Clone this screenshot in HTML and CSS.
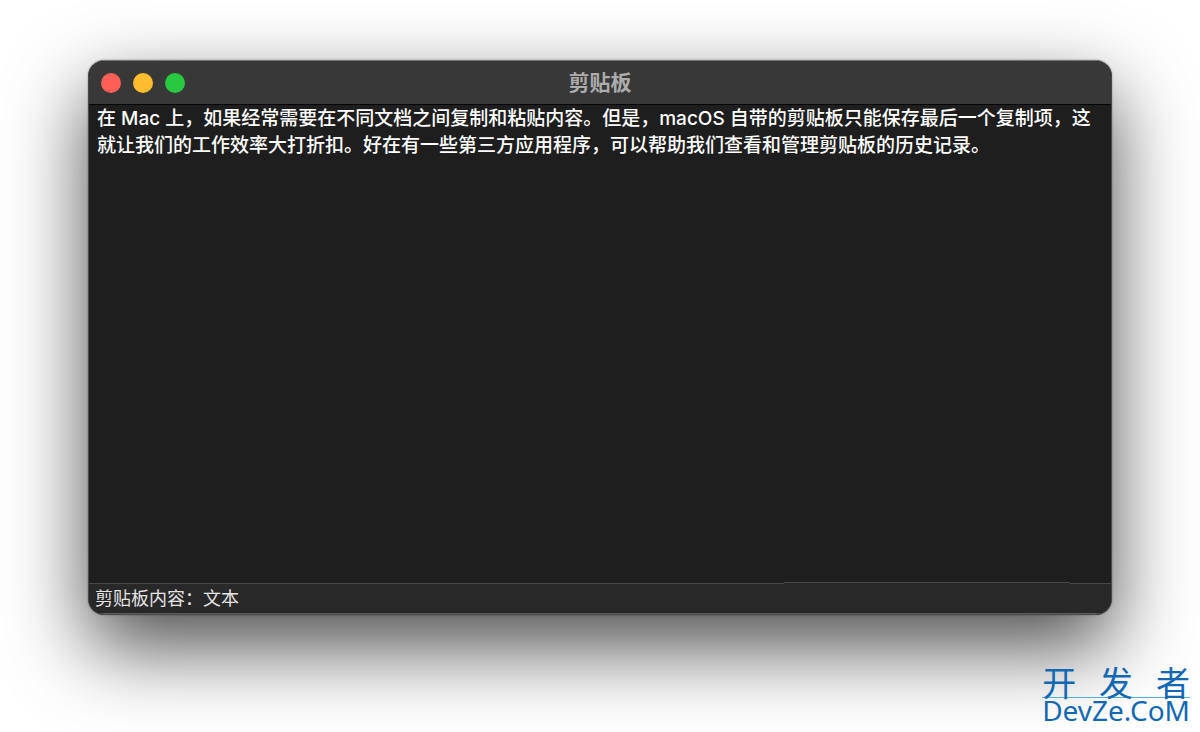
FILE: index.html
```html
<!DOCTYPE html>
<html lang="zh-CN">

<head>
    <meta charset="utf-8">
    <meta name="viewport" content="width=device-width, initial-scale=1">
    <title>剪贴板</title>
    <link rel="stylesheet" href="styles.css">
</head>

<body>
    <div class="window">
        <header class="titlebar">
            <div class="controls">
                <button class="close" type="button" aria-label="关闭"></button>
                <button class="minimize" type="button" aria-label="最小化"></button>
                <button class="zoom" type="button" aria-label="缩放"></button>
            </div>
            <h1>剪贴板</h1>
        </header>

        <main class="content">
            <p>在 Mac 上，如果经常需要在不同文档之间复制和粘贴内容。但是，macOS 自带的剪贴板只能保存最后一个复制项，这就让我们的工作效率大打折扣。好在有一些第三方应用程序，可以帮助我们查看和管理剪贴板的历史记录。</p>
        </main>

        <footer class="statusbar">剪贴板内容：文本</footer>
    </div>

    <div class="watermark">
        <div class="watermark-name"><span>开</span><span>发</span><span>者</span></div>
        <div class="watermark-site">DevZe.CoM</div>
    </div>
</body>

</html>
```
FILE: styles.css
```css
* {
    box-sizing: border-box;
}

body {
    display: flex;
    min-height: 100vh;
    margin: 0;
    padding: 60px 88px 117px;
    background-color: white;
    font-family: Inter, "Noto Sans CJK SC", sans-serif;
}

.window {
    display: flex;
    flex: 1;
    flex-direction: column;
    min-width: 0;
    overflow: hidden;
    border: 1px solid #4a4a4a;
    border-top-color: #777;
    border-radius: 16px;
    background-color: #1e1e1e;
    box-shadow: 0 0 2px rgba(0, 0, 0, 0.4), 0 32px 80px rgba(0, 0, 0, 0.7);
}

/* title bar */
.titlebar {
    display: grid;
    grid-template-columns: 1fr auto 1fr;
    align-items: center;
    height: 44px;
    padding: 0 12px;
    border-bottom: 1px solid #050505;
    background-color: #383838;
}

.controls {
    display: flex;
    gap: 12px;
}

.controls button {
    width: 20px;
    height: 20px;
    padding: 0;
    border: 0;
    border-radius: 50%;
}

.close {
    background-color: #ff5f57;
}

.minimize {
    background-color: #febc2e;
}

.zoom {
    background-color: #28c840;
}

.titlebar h1 {
    margin: 0;
    color: #acacac;
    font-size: 21px;
    line-height: 28px;
    font-weight: bold;
}

/* clipboard text */
.content {
    flex: 1;
    padding: 0 8px;
    color: white;
    font-size: 19px;
    line-height: 27px;
    font-weight: 500;
}

.content p {
    margin: 0;
}

/* status bar */
.statusbar {
    position: relative;
    padding: 1px 6px 0;
    border-top: 1px solid #484848;
    border-bottom: 1px solid #5c5c5c;
    background-color: #282828;
    color: #e4e4e4;
    font-size: 18px;
    line-height: 28px;
}

.statusbar::before {
    content: "";
    position: absolute;
    top: -2px;
    left: 68%;
    width: 28%;
    height: 2px;
    border-top: 1px solid #484848;
    background-color: #282828;
}

/* watermark over the page corner */
.watermark {
    position: absolute;
    right: 10px;
    bottom: 5px;
    color: #1268b3;
    font-family: "Noto Sans", "Noto Sans CJK SC", sans-serif;
}

.watermark-name {
    display: flex;
    justify-content: space-between;
    border-bottom: 1px solid #4fb0dc;
    font-family: "Noto Sans CJK SC", sans-serif;
    font-size: 34px;
    line-height: 30px;
}

.watermark-site {
    padding-bottom: 4px;
    font-size: 28px;
    line-height: 25px;
}
```
